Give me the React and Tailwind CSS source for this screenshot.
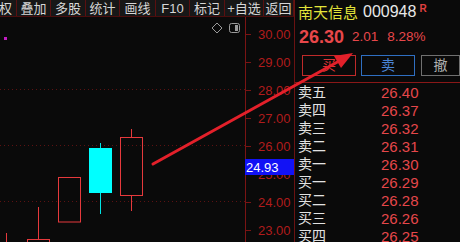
import React from "react";

const tabs = [
  { label: "权", w: "w-[17px]", first: true },
  { label: "叠加", w: "w-[34px]" },
  { label: "多股", w: "w-[35px]" },
  { label: "统计", w: "w-[34px]" },
  { label: "画线", w: "w-[36px]" },
  { label: "F10", w: "w-[34px]" },
  { label: "标记", w: "w-[35px]" },
  { label: "+自选", w: "w-[39px]" },
  { label: "返回", w: "w-[30px]" },
];

const axisLabels = ["30.00", "29.00", "28.00", "27.00", "26.00", "25.00", "24.00", "23.00"];

const sells = [
  ["卖五", "26.40"],
  ["卖四", "26.37"],
  ["卖三", "26.32"],
  ["卖二", "26.31"],
  ["卖一", "26.30"],
];

const buys = [
  ["买一", "26.29"],
  ["买二", "26.28"],
  ["买三", "26.26"],
  ["买四", "26.25"],
];

const UP = "#e6393c";

function Toolbar() {
  return (
    <div className="h-[17px] flex bg-[#171717] border-b border-[#4a0d0d] shrink-0">
      {tabs.map((t) => (
        <div
          key={t.label}
          className={`${t.w} h-full flex items-center border-r border-[#5a1010] text-[13px] leading-none text-[#d6d6d6] overflow-hidden whitespace-nowrap ${
            t.first ? "justify-end pr-[4px]" : "justify-center"
          }`}
        >
          {t.label}
        </div>
      ))}
    </div>
  );
}

function Candles() {
  // drawn in page coordinates, the plot starts at y = 17
  return (
    <svg className="block" width="245" height="225" viewBox="0 17 245 225">
      {[89.5, 145.5, 201.5].map((y) => (
        <line key={y} x1="0" x2="245" y1={y} y2={y} stroke="#5c1212" strokeDasharray="1 3" />
      ))}

      {/* top-right icons */}
      <polygon points="217,23 222,28 217,33 212,28" fill="none" stroke="#9a9a9a" />
      <rect x="229.5" y="23.5" width="10" height="9" rx="2" fill="none" stroke="#9a9a9a" />
      <rect x="235" y="25" width="3" height="6" fill="#9a9a9a" />

      <rect x="4" y="37" width="3" height="3" fill="#c21bc2" />

      {/* candle E */}
      <line x1="6.5" x2="6.5" y1="233" y2="242" stroke={UP} />
      {/* candle D */}
      <line x1="38.5" x2="38.5" y1="207" y2="239" stroke={UP} />
      <rect x="27.5" y="239.5" width="22" height="10" fill="none" stroke={UP} />
      {/* candle C */}
      <rect x="58.5" y="177.5" width="22" height="44.5" fill="none" stroke={UP} />
      {/* candle B */}
      <line x1="100.5" x2="100.5" y1="143" y2="214" stroke="#00e5e5" />
      <rect x="89" y="148" width="23" height="45" fill="#00ffff" />
      {/* candle A */}
      <line x1="131.5" x2="131.5" y1="129" y2="137" stroke={UP} />
      <line x1="131.5" x2="131.5" y1="196" y2="211" stroke={UP} />
      <rect x="120.5" y="137.5" width="22" height="58" fill="none" stroke={UP} />
    </svg>
  );
}

function Axis() {
  return (
    <div className="relative w-[49px] border-l border-[#7a1414] flex flex-col pt-[3px]">
      {axisLabels.map((l) => (
        <div key={l} className="h-[28px] flex items-center shrink-0">
          <div className="w-[5px] h-px bg-[#7a1414]" />
          <span className="ml-[7px] text-[13px] leading-none text-[#b01c1c]">{l}</span>
        </div>
      ))}
      <div className="absolute left-[-1px] top-[142px] w-[49px] h-[16px] bg-[#1212f5] flex items-center pl-[1px] text-[13px] leading-none text-white">
        24.93
      </div>
    </div>
  );
}

function Row({ label, price }) {
  return (
    <div className="h-[18px] flex items-center pl-[3px]">
      <span className="w-[83px] text-[14px] leading-none text-[#e2e2e2]">{label}</span>
      <span className="text-[15px] leading-none text-[#e5474a]">{price}</span>
    </div>
  );
}

function Panel() {
  return (
    <div className="flex-1 border-l border-[#6a1212] flex flex-col">
      <div className="h-[24px] flex items-center pl-[3px] shrink-0">
        <span className="text-[15px] leading-none text-[#e4e43a]">南天信息</span>
        <span className="ml-[5px] text-[16px] leading-none text-[#e8e8e8]">000948</span>
        <span className="ml-[3px] self-start mt-[4px] text-[10px] font-bold leading-none text-[#e04040]">R</span>
      </div>
      <div className="h-[25px] flex items-center pl-[4px] shrink-0 text-[#e8474a]">
        <span className="text-[18px] font-bold leading-none">26.30</span>
        <span className="ml-[8px] text-[13.5px] leading-none">2.01</span>
        <span className="ml-[9px] text-[13.5px] leading-none">8.28%</span>
      </div>
      <div className="mt-[6px] h-[21px] flex shrink-0">
        <div className="ml-[7px] w-[54px] border border-[#c02a2a] flex items-center justify-center text-[14px] text-[#d83434]">
          买
        </div>
        <div className="ml-[5px] w-[54px] border border-[#2f6fc2] flex items-center justify-center text-[14px] text-[#4a84d6]">
          卖
        </div>
        <div className="ml-[6px] w-[39px] border border-[#707070] flex items-center justify-center text-[14px] text-[#b0b0b0]">
          撤
        </div>
      </div>
      <div className="mt-[6px] border-t border-[#8a1818] flex flex-col">
        {sells.map(([l, p]) => (
          <Row key={l} label={l} price={p} />
        ))}
      </div>
      <div className="h-px bg-[linear-gradient(to_right,#d08040_0%,#d08040_77%,#3a5ab8_85%,#3a5ab8_100%)]" />
      <div className="flex flex-col">
        {buys.map(([l, p]) => (
          <Row key={l} label={l} price={p} />
        ))}
      </div>
    </div>
  );
}

export default function App() {
  return (
    <div className="relative w-[460px] h-[242px] overflow-hidden bg-[#0a0a0a] flex font-['Liberation_Sans','Noto_Sans_CJK_SC',sans-serif]">
      <div className="w-[294px] flex flex-col shrink-0">
        <Toolbar />
        <div className="flex-1 flex">
          <Candles />
          <Axis />
        </div>
      </div>
      <Panel />

      {/* annotation arrow drawn over chart and panel */}
      <svg className="absolute inset-0 pointer-events-none" width="460" height="242">
        <line x1="153" y1="164" x2="341" y2="60" stroke="#e3202a" strokeWidth="3" strokeLinecap="round" />
        <polygon points="353,53 334,56 341,68" fill="#e3202a" />
      </svg>
    </div>
  );
}
